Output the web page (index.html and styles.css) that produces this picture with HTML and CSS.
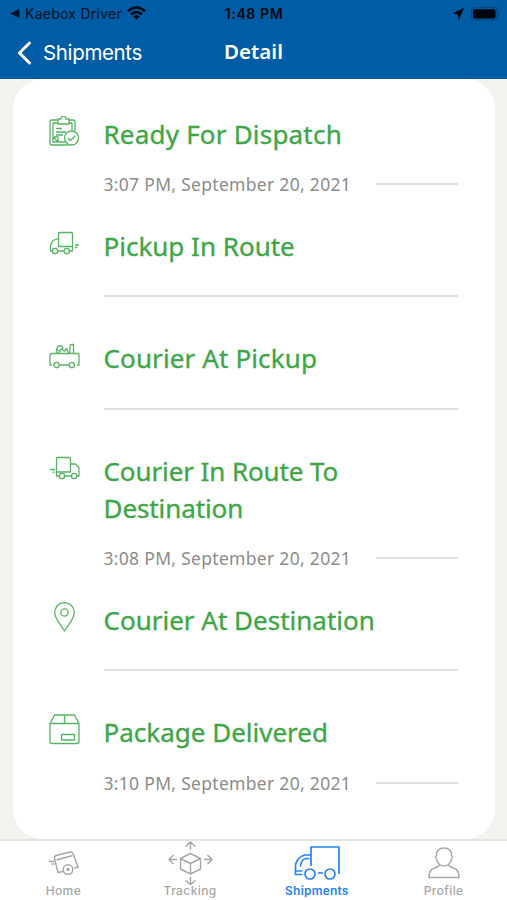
FILE: index.html
```
<!DOCTYPE html>
<html lang="en">
<head>
<meta charset="utf-8">
<title>Detail</title>
<link rel="stylesheet" href="styles.css">
</head>
<body>
<header class="header">
  <div class="status">
    <div class="status-left">
      <svg width="10" height="9" viewBox="0 0 10 9"><path d="M0 4.5 9.5 0v9z" fill="#001326"/></svg>
      <span class="app">Kaebox Driver</span>
      <svg class="wifi" width="19" height="14" viewBox="0 0 19 14" fill="none" stroke="#00080f" stroke-width="2.5"><path d="M1 5.3Q9.500-2.3 18 5.300M4.100 8.500Q9.500 3.700 14.900 8.500"/><path d="M6.500 10.500Q9.500 8 12.500 10.500L9.500 13.500z" fill="#00080f" stroke="none"/></svg>
    </div>
    <span class="time">1:48 PM</span>
    <div class="status-right">
      <svg width="12" height="12" viewBox="0 0 12 12"><path d="M11.500.5 6.800 11.500 6 6.200.5 5.500z" fill="#00080f" stroke="#00080f" stroke-width=".6" stroke-linejoin="round"/></svg>
      <svg width="29" height="14" viewBox="0 0 29 14"><rect x=".6" y=".6" width="25.500" height="12.500" rx="3.500" fill="none" stroke="#004884" stroke-width="1.200"/><rect x="2" y="2.300" width="22.500" height="9.200" rx="2" fill="#00060c"/><path d="M27 4.500q2 2.300 0 4.700z" fill="#004884"/></svg>
    </div>
  </div>
  <nav class="topnav">
    <a class="back">
      <svg width="15" height="24" viewBox="0 0 15 24" fill="none" stroke="#fff" stroke-width="3" stroke-linecap="round" stroke-linejoin="round"><path d="M12.500 2 2.500 12l10 10"/></svg>
      <span>Shipments</span>
    </a>
    <h1 class="heading">Detail</h1>
  </nav>
</header>

<main class="main">
  <section class="card">
    <article class="row">
      <svg class="icon" viewBox="0 0 32 32"><path d="M9 4H3Q1 4 1 6v21q0 2 2 2h16M20 4h4q2 0 2 2v9M9 7H4v19h12M20 7h3v8M9 8V3h3q0-3 2.500-3T17 3h3v5zM7 12.500h6M7 16h10M7 19h7M4 21l5 5M5 21h4v5"/><circle cx="22.500" cy="22" r="7"/><path d="m19 22 2.500 2.500 5-5"/></svg>
      <div class="body">
        <h2 class="title t1">Ready For Dispatch</h2>
        <div class="meta"><time>3:07 PM, September 20, 2021</time><i class="line"></i></div>
      </div>
    </article>
    <article class="row">
      <svg class="icon" viewBox="0 0 32 32"><path d="M9.500 18.500V5.500q0-1 1-1h12q1 0 1 1v13zM9.500 10.500 4 12.500 1.500 17v6H3M9 23h6M20.500 23h3v-4.500M26 17h4M26 19.500h2.500"/><circle cx="6" cy="23" r="2.700"/><circle cx="17.800" cy="23" r="2.700"/></svg>
      <div class="body">
        <h2 class="title t2">Pickup In Route</h2>
        <div class="meta"><i class="line"></i></div>
      </div>
    </article>
    <article class="row">
      <svg class="icon" viewBox="0 0 32 32"><path d="M3 25H1V15q0-1.500 1.500-1.500h26Q30 13.500 30 15v10h-2M10.500 25H20M7.500 13V9.500L9 6h4l1 3M9.500 13l3-4 3 2 2-2.500 2 4.500M21 13V6q0-1.500 2-1.500h1.500v8.500M7.500 9.500l4 2"/><circle cx="7.500" cy="25" r="2.700"/><circle cx="22.800" cy="25" r="2.700"/></svg>
      <div class="body">
        <h2 class="title t3">Courier At Pickup</h2>
        <div class="meta"><i class="line"></i></div>
      </div>
    </article>
    <article class="row">
      <svg class="icon" viewBox="0 0 32 32"><path d="M10 23H7.500V5.500q0-1 1-1h12q1 0 1 1V19h-14M21.500 11h5l3.500 4v8h-2M16 23h6.500M1 16.500h5M3.500 19.200H6"/><circle cx="13" cy="23" r="2.700"/><circle cx="25.200" cy="23" r="2.700"/></svg>
      <div class="body">
        <h2 class="title t4">Courier In Route To<br>Destination</h2>
        <div class="meta"><time>3:08 PM, September 20, 2021</time><i class="line"></i></div>
      </div>
    </article>
    <article class="row">
      <svg class="icon" viewBox="0 0 32 32"><path d="M15.500 29C12 23 5.700 17 5.700 10.500a9.800 9.800 0 0 1 19.600 0c0 6.500-6.300 12.500-9.800 18.500z"/><circle cx="15.500" cy="10.500" r="3.700"/></svg>
      <div class="body">
        <h2 class="title t5">Courier At Destination</h2>
        <div class="meta"><i class="line"></i></div>
      </div>
    </article>
    <article class="row">
      <svg class="icon" viewBox="0 0 32 32"><path d="M1 9.500 5.500 1h20L30 9.500V27.500q0 2-2 2H3q-2 0-2-2zH30M15.500 1v8.500M12.500 20.500h13v5.500h-13z"/></svg>
      <div class="body">
        <h2 class="title t6">Package Delivered</h2>
        <div class="meta"><time>3:10 PM, September 20, 2021</time><i class="line"></i></div>
      </div>
    </article>
  </section>
</main>

<footer class="tabs">
  <a class="tab">
    <svg width="46" height="46" viewBox="0 0 46 46"><path d="M18 31.500 14.500 17.500q-.5-2 1.500-3L30.500 11q2-.3 2.500 1.500L38 26l-3.500 1M18 31.500l5-1M16.500 19 32.500 14.500M9 20.500h5M11.500 23h3"/><circle cx="28" cy="28.500" r="4.800"/><circle cx="28" cy="28.500" r="1"/></svg>
    <span>Home</span>
  </a>
  <a class="tab">
    <svg width="46" height="46" viewBox="0 0 46 46"><path d="M23.500 12.500 33.500 17.500v10.500L23.500 33l-10-5V17.500zM13.500 17.500l10 5 10-5M23.500 22.500V33M23.500 9V1M18.500 5.500l5-4.500 5 4.500M23.500 36v7M18.500 39.500l5 4 5-4M10 18.500H2M6.500 14 2 18.500 6.500 23M37 18.500h8M40.500 14l4.500 4.500-4.500 4.500"/></svg>
    <span>Tracking</span>
  </a>
  <a class="tab active">
    <svg width="46" height="46" viewBox="0 0 46 46"><path d="M17 25V6h28v27M17 14h-6Q6 15 3 20q-1.500 2.500-1.500 5v8.500h7M15.500 17.500H12q-5 1-5.500 8M1.500 30h7M24 32h5"/><circle class="wheel" cx="16" cy="33" r="5"/><circle class="wheel" cx="36" cy="33" r="5"/></svg>
    <span>Shipments</span>
  </a>
  <a class="tab">
    <svg width="46" height="46" viewBox="0 0 46 46"><path d="M18.500 23.500C16.500 21.500 15.500 19.500 15.500 18q-1.500-2 0-4c0-4.500 3-7 7.500-7s7.500 2.500 7.500 7q1.500 2 0 4c0 1.500-1 3.500-3 5.500M18.500 23.500q-1 2.500-5 3.500-5.500 1.500-5.500 9.500h30q0-8-5.500-9.500-4-1-5-3.500-4.500 3-9 0z"/></svg>
    <span>Profile</span>
  </a>
</footer>
</body>
</html>
```
FILE: styles.css
```
* { box-sizing: border-box; }
body {
  margin: 0;
  height: 900px;
  display: flex;
  flex-direction: column;
  overflow: hidden;
  background: #f3f2ee;
  font-family: "Noto Sans", sans-serif;
}
svg { display: block; flex: none; }
.header { height: 79px; background: #005ca4; }
.status {
  display: grid;
  grid-template-columns: 1fr auto 1fr;
  align-items: center;
  height: 27px;
  padding: 0 7px 0 10px;
  font-family: Inter, sans-serif;
  color: #001326;
}
.status-left { display: flex; align-items: center; }
.app { margin-left: 5px; width: 97px; font-size: 14px; letter-spacing: .25px; white-space: nowrap; }
.wifi { margin-left: 5px; margin-top: -2px; }
.time { margin-right: 2px; font-size: 14px; font-weight: 600; letter-spacing: .6px; color: #00080f; }
.status-right { display: flex; align-items: center; justify-content: flex-end; gap: 7px; }
.topnav {
  display: grid;
  grid-template-columns: 1fr auto 1fr;
  align-items: center;
  height: 51px;
  padding: 0 17px;
  color: #fff;
}
.back { display: flex; align-items: center; gap: 11px; font: 20.5px/28px Inter, sans-serif; letter-spacing: -.35px; }
.heading { margin: 0 0 3px; font-size: 20.5px; line-height: 28px; font-weight: 650; }
.main { height: 760px; padding: 0 12.5px; }
.card {
  height: 760px;
  padding: 36.700px 36px 0 36px;
  border-radius: 30px;
  background: #fff;
}
.row { display: flex; gap: 23px; padding-bottom: 30.300px; }
.icon {
  width: 32px;
  height: 32px;
  fill: none;
  stroke: #58b364;
  stroke-width: 1.300;
  stroke-linejoin: round;
}
.body { width: 354.500px; }
.title { margin: 0; font-size: 26px; line-height: 37px; font-weight: 400; -webkit-text-stroke: .35px #3fa648; color: #3fa648; white-space: nowrap; }
.t1 { letter-spacing: .2px; }
.t3 { letter-spacing: .12px; }
.t4 { letter-spacing: -.1px; }
.meta { display: flex; align-items: center; gap: 25px; height: 27px; margin-top: 18px; }
.meta time { width: 247px; flex: none; font-size: 17.500px; letter-spacing: .3px; color: #8c8c8c; white-space: nowrap; }
.line { flex: 1; height: 2px; background: #dedede; }
.tabs {
  display: grid;
  grid-template-columns: repeat(4, 1fr);
  height: 61px;
  border-top: 2px solid #e4e4e2;
  background: #fff;
}
.tab { display: flex; flex-direction: column; align-items: center; color: #a6a6a6; }
.tab svg { fill: none; stroke: currentColor; stroke-width: 1.400; stroke-linejoin: round; }
.tab .wheel { fill: #fff; }
.tab span { margin-top: -4px; font: 500 12px/16px Inter, sans-serif; letter-spacing: .4px; }
.tab.active { color: #2384f5; }
.tab.active svg { stroke-width: 1.700; }
.tab.active span { font-weight: 600; letter-spacing: .2px; }
```
